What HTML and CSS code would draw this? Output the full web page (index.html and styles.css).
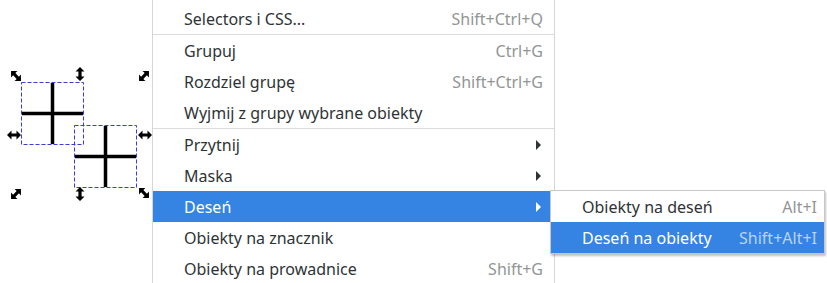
FILE: index.html
```html
<!DOCTYPE html>
<html lang="pl">
  <head>
    <meta charset="UTF-8" />
    <title>Obiekt - menu</title>
    <link rel="stylesheet" href="styles.css">
  </head>
  <body>
    <div id="canvas">
      <svg class="drawing" width="160" height="283" viewBox="0 0 160 283">
        <defs>
          <path id="arrow" d="M-7,0 L-2.5,-4.5 L-2.5,-1.6 L2.5,-1.6 L2.5,-4.5 L7,0 L2.5,4.5 L2.5,1.6 L-2.5,1.6 L-2.5,4.5 Z" />
        </defs>
        <!-- bounding boxes -->
        <rect x="21.5" y="82.5" width="62" height="62" class="bbox" />
        <rect x="74.5" y="125.5" width="62" height="62" class="bbox" />
        <!-- crosses -->
        <path d="M52.5,83 V144 M22,113.5 H83" class="cross" />
        <path d="M105.5,126 V187 M75,156.5 H136" class="cross" />
        <!-- handles -->
        <use href="#arrow" transform="translate(16,76) rotate(45)" />
        <use href="#arrow" transform="translate(80,74) rotate(90)" />
        <use href="#arrow" transform="translate(144,76) rotate(-45)" />
        <use href="#arrow" transform="translate(14,135)" />
        <use href="#arrow" transform="translate(145,135)" />
        <use href="#arrow" transform="translate(16,194) rotate(-45)" />
        <use href="#arrow" transform="translate(80,194) rotate(90)" />
        <use href="#arrow" transform="translate(144,193) rotate(45)" />
      </svg>
    </div>

    <div class="menu main">
      <div class="item"><span>Selectors i CSS...</span><span class="accel">Shift+Ctrl+Q</span></div>
      <div class="sep"></div>
      <div class="item"><span>Grupuj</span><span class="accel">Ctrl+G</span></div>
      <div class="item"><span>Rozdziel grupę</span><span class="accel">Shift+Ctrl+G</span></div>
      <div class="item"><span>Wyjmij z grupy wybrane obiekty</span></div>
      <div class="sep"></div>
      <div class="item"><span>Przytnij</span><span class="arrow"></span></div>
      <div class="item"><span>Maska</span><span class="arrow"></span></div>
      <div class="item active"><span>Deseń</span><span class="arrow"></span></div>
      <div class="item"><span>Obiekty na znacznik</span></div>
      <div class="item"><span>Obiekty na prowadnice</span><span class="accel">Shift+G</span></div>
    </div>

    <div class="menu sub">
      <div class="item"><span>Obiekty na deseń</span><span class="accel">Alt+I</span></div>
      <div class="item active"><span>Deseń na obiekty</span><span class="accel">Shift+Alt+I</span></div>
    </div>
  </body>
</html>
```

FILE: styles.css
```css
* {
  box-sizing: border-box;
}

body {
  margin: 0;
  width: 827px;
  height: 283px;
  overflow: hidden;
  background: #fff;
  font-family: "Noto Sans", sans-serif;
  font-size: 16px;
  color: #2e3436;
  position: relative;
}

.drawing {
  display: block;
}

.drawing use {
  fill: #000;
}

.bbox {
  fill: none;
  stroke: #3a3ae0;
  stroke-width: 1;
  stroke-dasharray: 4 2;
}

.cross {
  stroke: #000;
  stroke-width: 3.5;
  fill: none;
}

.menu {
  position: absolute;
  background: #fff;
  border: 1px solid #d6d6d6;
}

.main {
  left: 152px;
  top: -29px;
  width: 403px;
}

.sub {
  left: 550px;
  top: 190px;
  width: 275px;
  box-shadow: 1px 2px 2px rgba(0, 0, 0, 0.25);
  border-color: #c8c8c8;
}

.item {
  display: flex;
  align-items: center;
  justify-content: space-between;
  height: 31px;
  padding: 0 11px 0 31px;
  white-space: nowrap;
}

.main .item:first-child {
  margin-top: 31px;
}

.sub .item {
  padding: 0 7px 0 31px;
}

.accel {
  color: #929595;
}

.item.active {
  background: #3584e4;
  color: #fff;
}

.item.active .accel {
  color: #b9d3f3;
}

.arrow {
  width: 0;
  height: 0;
  border-top: 5px solid transparent;
  border-bottom: 5px solid transparent;
  border-left: 5px solid #2e3436;
  margin-right: 2px;
}

.item.active .arrow {
  border-left-color: #fff;
}

.sep {
  height: 1px;
  background: #dcdcdc;
}
```
